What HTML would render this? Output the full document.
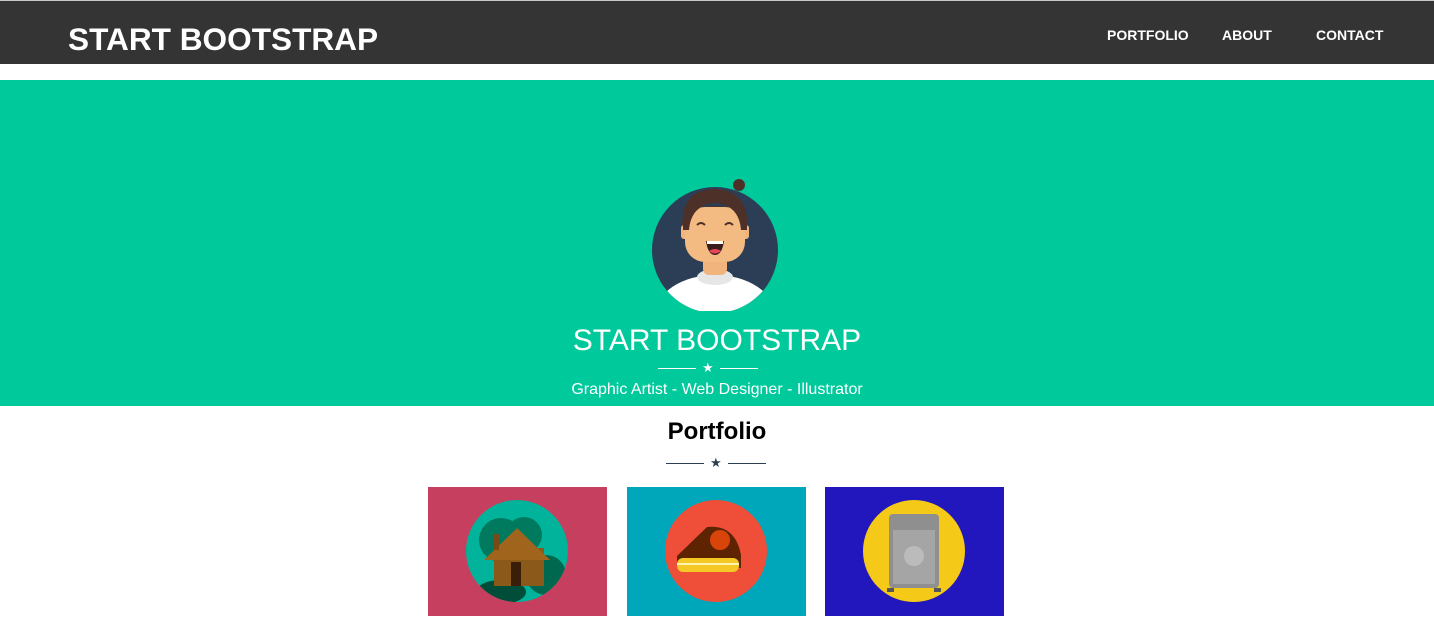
<!DOCTYPE html>
<html><head><style>
*{margin:0;padding:0;box-sizing:border-box}
body{width:1434px;height:630px;overflow:hidden;background:#fff;font-family:"Liberation Sans",Arial,sans-serif;position:relative}
.nav{position:absolute;top:0;left:0;width:1434px;height:64px;background:#343434;border-top:1px solid #c8c8c8}
.brand{position:absolute;left:68px;top:20px;color:#fff;font-weight:bold;font-size:31.6px;line-height:36px}
.nl{position:absolute;top:26px;color:#fff;font-weight:bold;font-size:14px;line-height:16px}
.hero{position:absolute;top:80px;left:0;width:1434px;height:326px;background:#00c99c}
.t{position:absolute;width:100%;text-align:center;color:#fff}
.s{position:absolute;font-size:13px;line-height:16px}
.div{position:absolute;height:1px}
.card{position:absolute;top:487px;width:179px;height:129px}
.card svg{position:absolute;left:38px;top:13px}
</style></head><body>
<div class="nav">
<div class="brand">START BOOTSTRAP</div>
<div class="nl" style="left:1107px">PORTFOLIO</div>
<div class="nl" style="left:1222px">ABOUT</div>
<div class="nl" style="left:1316px">CONTACT</div>
</div>
<div class="hero">
<svg style="position:absolute;left:651px;top:95px" width="130" height="136" viewBox="0 0 130 136">
<defs><clipPath id="c"><circle cx="64" cy="75" r="63"/></clipPath></defs>
<circle cx="64" cy="75" r="63" fill="#2b3e55"/>
<g clip-path="url(#c)">
<ellipse cx="64" cy="140" rx="60" ry="40" fill="#fff"/>
<ellipse cx="64" cy="102" rx="18" ry="8" fill="#e6e6e6"/>
</g>
<rect x="52" y="78" width="24" height="22" rx="6" fill="#f0b47c"/>
<ellipse cx="64" cy="47" rx="33" ry="16" fill="#4d3028"/>
<circle cx="88" cy="10" r="6" fill="#4d3028"/>
<rect x="30" y="50" width="7" height="14" rx="3" fill="#f0b47c"/>
<rect x="91" y="50" width="7" height="14" rx="3" fill="#f0b47c"/>
<rect x="34" y="32" width="60" height="55" rx="20" fill="#f3ba82"/>
<path d="M32 42 Q34 16 62 14 Q92 14 96 42 L96 55 L90 55 Q88 30 64 28 Q40 30 38 55 L32 55Z" fill="#4d3028"/>
<path d="M46 50 q4 -4 8 0 M74 50 q4 -4 8 0" stroke="#4d3028" stroke-width="2" fill="none"/>
<path d="M55 66 h18 q-2 14 -9 14 q-7 0 -9 -14z" fill="#3a1c1c"/>
<path d="M58 76 q6 5 12 0 q-6 -4 -12 0z" fill="#e8455a"/>
<rect x="56" y="66" width="16" height="3" fill="#fff"/>
</svg>
<div class="t" style="top:244px;font-size:30px;line-height:34px">START BOOTSTRAP</div>
<div class="div" style="top:288px;left:658px;width:38px;background:#fff"></div>
<div class="div" style="top:288px;left:720px;width:38px;background:#fff"></div>
<div class="s" style="top:280px;left:702px;color:#fff">★</div>
<div class="t" style="top:301px;font-size:16px;line-height:18px">Graphic Artist - Web Designer - Illustrator</div>
</div>
<div class="t" style="top:418px;font-size:24px;line-height:28px;font-weight:bold;color:#000">Portfolio</div>
<div class="div" style="top:463px;left:666px;width:38px;background:#2c3e50"></div>
<div class="div" style="top:463px;left:728px;width:38px;background:#2c3e50"></div>
<div class="s" style="top:455px;left:710px;color:#2c3e50">★</div>

<div class="card" style="left:428px;background:#c63f5e">
<svg width="102" height="102" viewBox="0 0 102 102">
<defs><clipPath id="a"><ellipse cx="51" cy="51" rx="51" ry="51"/></clipPath></defs>
<circle cx="51" cy="51" r="51" fill="#00b39a"/>
<g clip-path="url(#a)">
<circle cx="35" cy="40" r="22" fill="#007a5e"/><circle cx="58" cy="35" r="18" fill="#007a5e"/>
<circle cx="80" cy="75" r="20" fill="#00684f"/><ellipse cx="35" cy="92" rx="25" ry="12" fill="#004d3a"/>
</g>
<rect x="28" y="48" width="50" height="38" fill="#8b5a1a"/>
<path d="M18 60 L51 28 L84 60Z" fill="#a0641c"/>
<rect x="45" y="62" width="10" height="24" fill="#3a1e08"/>
<rect x="28" y="34" width="5" height="16" fill="#7a4a16"/>
</svg></div>
<div class="card" style="left:627px;background:#00a6ba">
<svg width="102" height="102" viewBox="0 0 102 102">
<circle cx="51" cy="51" r="51" fill="#ef4f38"/>
<path d="M12 68 L12 56 L42 27 Q70 24 76 55 L76 68Z" fill="#5e2300"/>
<rect x="12" y="58" width="62" height="14" rx="6" fill="#f4c825"/>
<rect x="12" y="63" width="62" height="2" fill="#fff3b0"/>
<circle cx="55" cy="40" r="10" fill="#d9440a"/>
</svg></div>
<div class="card" style="left:825px;background:#2216bd">
<svg width="102" height="102" viewBox="0 0 102 102">
<circle cx="51" cy="51" r="51" fill="#f4c918"/>
<rect x="26" y="14" width="50" height="74" rx="4" fill="#8f8f8f"/>
<rect x="30" y="30" width="42" height="54" fill="#a5a5a5"/>
<circle cx="51" cy="56" r="10" fill="#bbb"/>
<rect x="24" y="88" width="7" height="4" fill="#555"/><rect x="71" y="88" width="7" height="4" fill="#555"/>
</svg></div>
</body></html>
